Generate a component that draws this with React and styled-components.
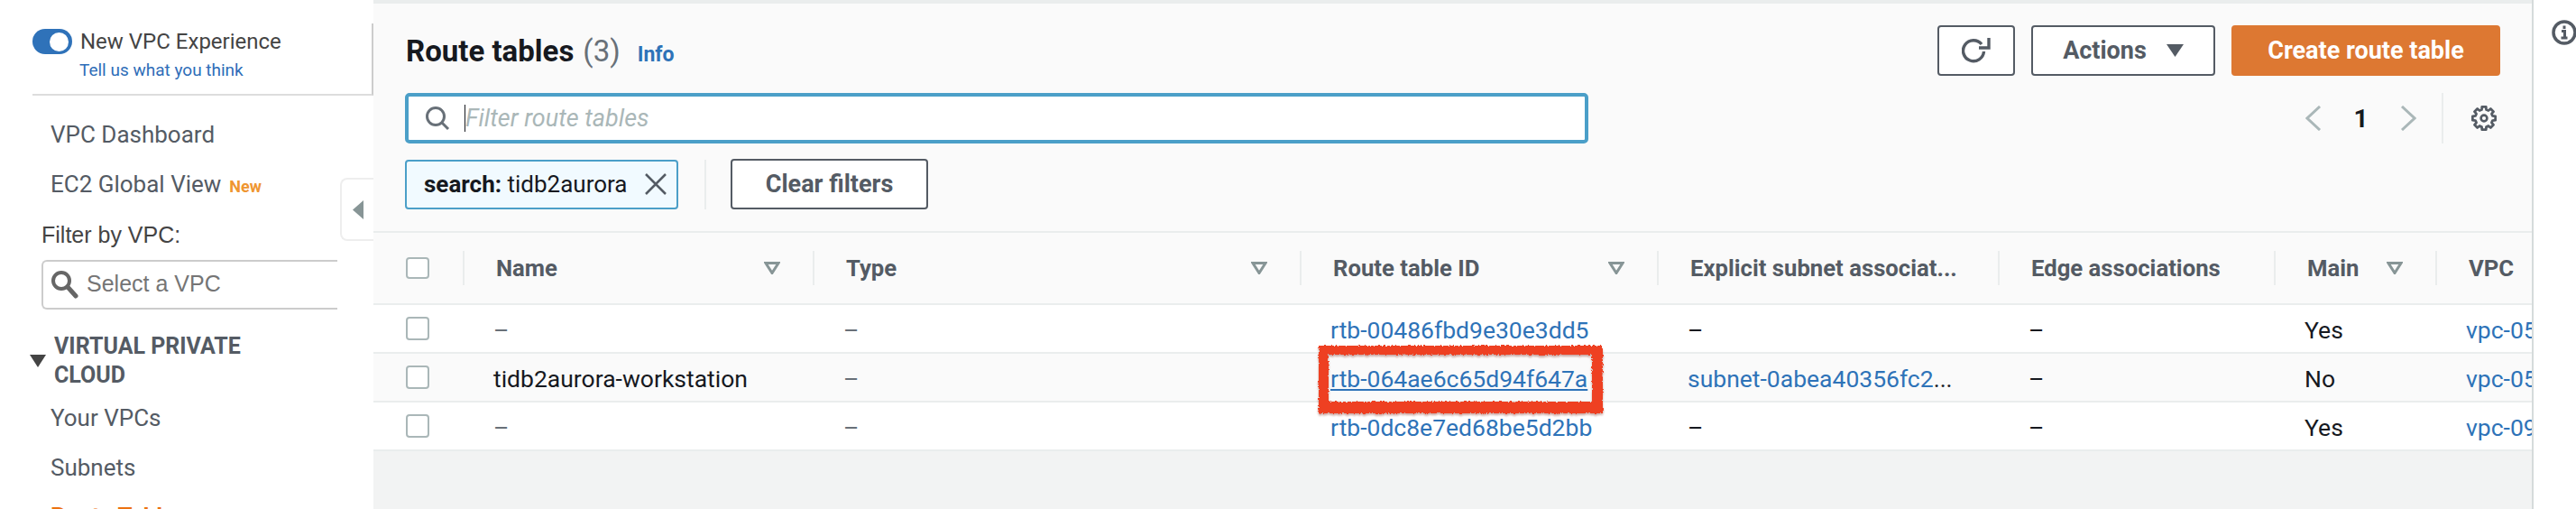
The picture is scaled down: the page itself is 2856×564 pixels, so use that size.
import React from "react";
import styled, { createGlobalStyle } from "styled-components";

const GlobalStyle = createGlobalStyle`
  html, body { margin: 0; padding: 0; background: #fff; }
  body { font-family: Roboto, Arial, sans-serif; overflow: hidden; }
`;

const Page = styled.div`
  display: flex;
  width: 2856px;
  height: 564px;
  overflow: hidden;
  position: relative;
`;

/* sidebar */
const Sidebar = styled.aside`
  width: 414px;
  flex: none;
  position: relative;
  background: #fff;
  padding-top: 26px;
  box-sizing: border-box;
`;
const ToggleBlock = styled.div`
  margin-left: 36px;
  height: 72px;
  border-bottom: 2px solid #ddd;
  border-right: 2px solid #ccc;
  padding-top: 6px;
`;
const ToggleRow = styled.div`
  display: flex;
  align-items: center;
  gap: 9px;
`;
const Toggle = styled.span`
  width: 44px;
  height: 28px;
  border-radius: 14px;
  background: #2f72b9;
  display: flex;
  align-items: center;
  justify-content: flex-end;
  padding-right: 4px;
  box-sizing: border-box;
  &::after {
    content: "";
    width: 21px;
    height: 21px;
    border-radius: 50%;
    background: #fff;
  }
`;
const ToggleLabel = styled.span`
  font-size: 24px;
  line-height: 28px;
  color: #444;
`;
const Feedback = styled.a`
  display: block;
  margin: 7px 0 0 52px;
  font-size: 19px;
  line-height: 22px;
  color: #2e6db8;
`;
const NavLink = styled.div`
  margin-left: 56px;
  margin-top: ${(p) => p.$top || 0}px;
  font-size: 26px;
  line-height: 34px;
  color: ${(p) => (p.$active ? "#ec7211" : "#545b64")};
  font-weight: ${(p) => (p.$active ? 700 : 400)};
  display: flex;
  align-items: baseline;
  gap: 9px;
`;
const NewTag = styled.span`
  font-size: 18px;
  font-weight: 700;
  color: #ef9631;
`;
const FilterLabel = styled.div`
  margin: 21px 0 0 46px;
  font-family: "Liberation Sans", Arial, sans-serif;
  font-size: 25px;
  line-height: 30px;
  color: #444;
`;
const VpcSelect = styled.div`
  margin: 13px 0 0 46px;
  width: 328px;
  height: 55px;
  box-sizing: border-box;
  border: 2px solid #ccc;
  border-right: none;
  border-radius: 6px 0 0 6px;
  display: flex;
  align-items: center;
  padding: 0 0 2px 8px;
  gap: 8px;
  font-family: "Liberation Sans", Arial, sans-serif;
  font-size: 25px;
  color: #757575;
`;
const SectionHead = styled.div`
  margin: 25px 0 0 33px;
  display: flex;
  align-items: center;
  gap: 9px;
  font-size: 25px;
  line-height: 32px;
  font-weight: 700;
  color: #545b64;
  width: 260px;
`;
const CollapseTab = styled.div`
  position: absolute;
  top: 197px;
  right: 0;
  width: 37px;
  height: 70px;
  box-sizing: border-box;
  background: #fff;
  border: 2px solid #eee;
  border-right: none;
  border-radius: 8px 0 0 8px;
  display: flex;
  align-items: center;
  justify-content: center;
`;

/* main area */
const Main = styled.main`
  width: 2393px;
  flex: none;
  background: #f2f3f3;
  overflow: hidden;
`;
const Header = styled.section`
  height: 258px;
  box-sizing: border-box;
  background: #fafafa;
  border-top: 4px solid #eaeded;
  border-bottom: 2px solid #eaeded;
  padding: 24px 35px 0;
`;
const TitleRow = styled.div`
  display: flex;
  align-items: center;
  justify-content: space-between;
  height: 56px;
`;
const TitleGroup = styled.div`
  display: flex;
  align-items: baseline;
  font-size: 33px;
  margin-left: 1px;
`;
const Title = styled.h1`
  margin: 0;
  font-size: 33px;
  font-weight: 700;
  color: #16191f;
`;
const Count = styled.span`
  margin-left: 10px;
  color: #687078;
`;
const InfoLink = styled.a`
  margin-left: 19px;
  font-size: 23px;
  font-weight: 700;
  color: #2e73b8;
`;
const Actions = styled.div`
  display: flex;
  gap: 18px;
`;
const Button = styled.button`
  height: 56px;
  width: ${(p) => p.$w}px;
  flex: none;
  box-sizing: border-box;
  border: 2px solid #545b64;
  border-radius: 4px;
  background: #fff;
  color: #545b64;
  font-family: inherit;
  font-size: 27px;
  font-weight: 700;
  display: flex;
  align-items: center;
  justify-content: center;
  gap: 22px;
  padding: 0;
`;
const PrimaryButton = styled(Button)`
  background: #dd7832;
  border-color: #dd7832;
  color: #fff;
`;
const FilterRow = styled.div`
  display: flex;
  justify-content: space-between;
  margin-top: 19px;
`;
const SearchBox = styled.div`
  width: 1312px;
  height: 56px;
  box-sizing: border-box;
  background: #fff;
  border: 4px solid #4b9fc8;
  border-radius: 5px;
  display: flex;
  align-items: center;
  padding-left: 18px;
  gap: 16px;
`;
const Placeholder = styled.span`
  border-left: 1px solid #16191f;
  font-size: 27px;
  line-height: 30px;
  font-style: italic;
  color: #aab7b8;
`;
const Pager = styled.div`
  display: flex;
  align-items: center;
  height: 56px;
  padding-right: 4px;
`;
const PageNumber = styled.span`
  font-size: 28px;
  font-weight: 700;
  color: #16191f;
  width: 87px;
  text-align: center;
`;
const PagerRule = styled.span`
  width: 2px;
  height: 56px;
  background: #eaeded;
  margin: 0 31px 0 28px;
`;
const ChipRow = styled.div`
  display: flex;
  align-items: center;
  margin-top: 17px;
`;
const Chip = styled.div`
  width: 303px;
  height: 55px;
  flex: none;
  box-sizing: border-box;
  background: #f1faff;
  border: 2px solid #4b9fc8;
  border-radius: 4px;
  display: flex;
  align-items: center;
  justify-content: space-between;
  padding: 0 11px 0 19px;
  font-size: 26px;
  color: #16191f;
  white-space: nowrap;
  b { font-weight: 700; }
`;
const ChipRule = styled.span`
  width: 2px;
  height: 55px;
  background: #eaeded;
  margin: 0 27px 0 29px;
`;

/* table */
const columns = "99px 388px 540px 396px 378px 306px 179px 200px";
const HeadRow = styled.div`
  display: grid;
  grid-template-columns: ${columns};
  height: 78px;
  background: #fafafa;
  border-bottom: 2px solid #eaeded;
  align-items: center;
`;
const HeadCell = styled.div`
  height: 38px;
  box-sizing: border-box;
  border-left: 2px solid #eaeded;
  padding: 0 36px 0 35px;
  display: flex;
  align-items: center;
  justify-content: space-between;
  font-size: 25.7px;
  font-weight: 700;
  color: #545b64;
  white-space: nowrap;
`;
const BodyRow = styled.div`
  display: grid;
  grid-template-columns: ${columns};
  height: 52px;
  background: ${(p) => (p.$alt ? "#fafafa" : "#fff")};
  border-bottom: 2px solid #eaeded;
  align-items: center;
`;
const Cell = styled.div`
  padding: 2px 0 0 34px;
  font-size: 26.5px;
  color: #16191f;
  white-space: nowrap;
  overflow: hidden;
`;
const Dash = styled.span`
  color: ${(p) => (p.$muted ? "#687078" : "#16191f")};
`;
const Link = styled.a`
  color: #2e73b8;
  text-decoration: ${(p) => (p.$under ? "underline" : "none")};
`;
const Check = styled.span`
  display: block;
  width: 26px;
  height: ${(p) => p.$h || 26}px;
  margin-left: 36px;
  box-sizing: border-box;
  background: #fff;
  border: 2px solid #aab7b8;
  border-radius: 4px;
`;
const MarkerArt = styled.svg`
  position: absolute;
  left: 1452px;
  top: 373px;
`;

/* right rail */
const Rail = styled.aside`
  flex: 1;
  background: #fff;
  border-left: 2px solid #d5dbdb;
  padding: 22px 0 0 20px;
`;

const SortIcon = () => (
  <svg width="18" height="14" viewBox="0 0 18 14">
    <path d="M2 1.5h14L9 12.5z" fill="none" stroke="#879596" strokeWidth="3" />
  </svg>
);
const Chevron = ({ flip }) => (
  <svg width="18" height="28" viewBox="0 0 18 28">
    <path d={flip ? "M2 1l14 13L2 27" : "M16 1L2 14l14 13"} fill="none" stroke="#aab7b8" strokeWidth="3" />
  </svg>
);
const SearchIcon = () => (
  <svg width="28" height="28" viewBox="0 0 28 28">
    <circle cx="12" cy="12" r="9.5" fill="none" stroke="#687078" strokeWidth="3" />
    <path d="M19 19l7 7" stroke="#687078" strokeWidth="3" />
  </svg>
);
const Magnifier = () => (
  <svg width="32" height="32" viewBox="0 0 32 32">
    <circle cx="12" cy="12" r="9" fill="#fff" stroke="#666" strokeWidth="4" />
    <path d="M19 19l9 10" stroke="#666" strokeWidth="5" strokeLinecap="round" />
  </svg>
);
const CloseIcon = () => (
  <svg width="24" height="24" viewBox="0 0 24 24">
    <path d="M1 1l22 22M23 1L1 23" stroke="#545b64" strokeWidth="2.5" />
  </svg>
);
const RefreshIcon = () => (
  <svg width="32" height="28" viewBox="0 0 32 28">
    <path d="M22 7A11.5 11.5 0 1 0 24.5 15" fill="none" stroke="#545b64" strokeWidth="3.4" />
    <path d="M19 11h11V0" fill="none" stroke="#545b64" strokeWidth="3.4" />
  </svg>
);
const CaretDown = () => (
  <svg width="19" height="14" viewBox="0 0 19 14">
    <path d="M0 0h19L9.5 14z" fill="#545b64" />
  </svg>
);
const InfoIcon = () => (
  <svg width="28" height="28" viewBox="0 0 28 28">
    <circle cx="14" cy="14" r="12" fill="none" stroke="#545b64" strokeWidth="3.5" />
    <path d="M14 6.5v3.5M11 12.5h3.5v7M10.5 20h7" fill="none" stroke="#545b64" strokeWidth="3" />
  </svg>
);

// eight teeth round the centre, as a closed outline
const gearPath = () => {
  const point = (r, deg) => {
    const a = (deg * Math.PI) / 180;
    return `${(14 + r * Math.cos(a)).toFixed(2)} ${(14 + r * Math.sin(a)).toFixed(2)}`;
  };
  let d = "";
  for (let i = 0; i < 8; i++) {
    const c = i * 45;
    d += `${i ? "L" : "M"}${point(9.8, c - 15)}L${point(12.8, c - 10)}L${point(12.8, c + 10)}L${point(9.8, c + 15)}`;
  }
  return d + "Z";
};
const GearIcon = () => (
  <svg width="28" height="28" viewBox="0 0 28 28">
    <path d={gearPath()} fill="none" stroke="#545b64" strokeWidth="2.8" strokeLinejoin="round" />
    <circle cx="14" cy="14" r="3.4" fill="none" stroke="#545b64" strokeWidth="2.6" />
  </svg>
);

// hand drawn red box from the annotation tool
const Marker = () => (
  <MarkerArt width="336" height="96" viewBox="0 0 336 96">
    <defs>
      <filter id="rough" x="-5%" y="-15%" width="110%" height="130%">
        <feTurbulence type="fractalNoise" baseFrequency="0.45" numOctaves="2" seed="4" />
        <feDisplacementMap in="SourceGraphic" scale="4" />
        <feDropShadow dx="0" dy="2" stdDeviation="1.2" floodColor="#7a2814" floodOpacity="0.4" />
      </filter>
    </defs>
    <path
      d="M10 10H325V85H10ZM21 20V72H313V20Z"
      fill="#ee4123"
      fillRule="evenodd"
      filter="url(#rough)"
    />
  </MarkerArt>
);

const rows = [
  { name: "–", id: "rtb-00486fbd9e30e3dd5", subnet: "–", main: "Yes", vpc: "vpc-05" },
  { name: "tidb2aurora-workstation", id: "rtb-064ae6c65d94f647a", subnet: "subnet-0abea40356fc2", main: "No", vpc: "vpc-05", alt: true, under: true },
  { name: "–", id: "rtb-0dc8e7ed68be5d2bb", subnet: "–", main: "Yes", vpc: "vpc-09" },
];

export default function App() {
  return (
    <Page>
      <GlobalStyle />
      <Sidebar>
        <ToggleBlock>
          <ToggleRow>
            <Toggle />
            <ToggleLabel>New VPC Experience</ToggleLabel>
          </ToggleRow>
          <Feedback>Tell us what you think</Feedback>
        </ToggleBlock>
        <NavLink $top={26}>VPC Dashboard</NavLink>
        <NavLink $top={21}>
          EC2 Global View <NewTag>New</NewTag>
        </NavLink>
        <FilterLabel>Filter by VPC:</FilterLabel>
        <VpcSelect>
          <Magnifier />
          Select a VPC
        </VpcSelect>
        <SectionHead>
          <svg width="18" height="14" viewBox="0 0 18 14" style={{ flex: "none" }}>
            <path d="M0 0h18L9 14z" fill="#444" />
          </svg>
          <span>VIRTUAL PRIVATE CLOUD</span>
        </SectionHead>
        <NavLink $top={14}>Your VPCs</NavLink>
        <NavLink $top={21}>Subnets</NavLink>
        <NavLink $top={20} $active>Route Tables</NavLink>
        <CollapseTab>
          <svg width="12" height="21" viewBox="0 0 12 21">
            <path d="M12 0v21L0 10.5z" fill="#879596" />
          </svg>
        </CollapseTab>
      </Sidebar>

      <Main>
        <Header>
          <TitleRow>
            <TitleGroup>
              <Title>Route tables</Title>
              <Count>(3)</Count>
              <InfoLink>Info</InfoLink>
            </TitleGroup>
            <Actions>
              <Button $w={86}><RefreshIcon /></Button>
              <Button $w={204}>Actions <CaretDown /></Button>
              <PrimaryButton $w={298}>Create route table</PrimaryButton>
            </Actions>
          </TitleRow>
          <FilterRow>
            <SearchBox>
              <SearchIcon />
              <Placeholder>Filter route tables</Placeholder>
            </SearchBox>
            <Pager>
              <Chevron />
              <PageNumber>1</PageNumber>
              <Chevron flip />
              <PagerRule />
              <GearIcon />
            </Pager>
          </FilterRow>
          <ChipRow>
            <Chip>
              <span><b>search:</b> tidb2aurora</span>
              <CloseIcon />
            </Chip>
            <ChipRule />
            <Button $w={219}>Clear filters</Button>
          </ChipRow>
        </Header>

        <HeadRow>
          <Check $h={24} />
          <HeadCell>Name <SortIcon /></HeadCell>
          <HeadCell>Type <SortIcon /></HeadCell>
          <HeadCell>Route table ID <SortIcon /></HeadCell>
          <HeadCell>Explicit subnet associat...</HeadCell>
          <HeadCell>Edge associations</HeadCell>
          <HeadCell>Main <SortIcon /></HeadCell>
          <HeadCell>VPC</HeadCell>
        </HeadRow>
        {rows.map((r) => (
          <BodyRow key={r.id} $alt={r.alt}>
            <Check />
            <Cell>{r.name === "–" ? <Dash $muted>–</Dash> : r.name}</Cell>
            <Cell><Dash $muted>–</Dash></Cell>
            <Cell><Link $under={r.under}>{r.id}</Link></Cell>
            <Cell>{r.subnet === "–" ? <Dash>–</Dash> : <><Link>{r.subnet}</Link>...</>}</Cell>
            <Cell><Dash>–</Dash></Cell>
            <Cell>{r.main}</Cell>
            <Cell><Link>{r.vpc}</Link></Cell>
          </BodyRow>
        ))}
      </Main>

      <Rail><InfoIcon /></Rail>
      <Marker />
    </Page>
  );
}
